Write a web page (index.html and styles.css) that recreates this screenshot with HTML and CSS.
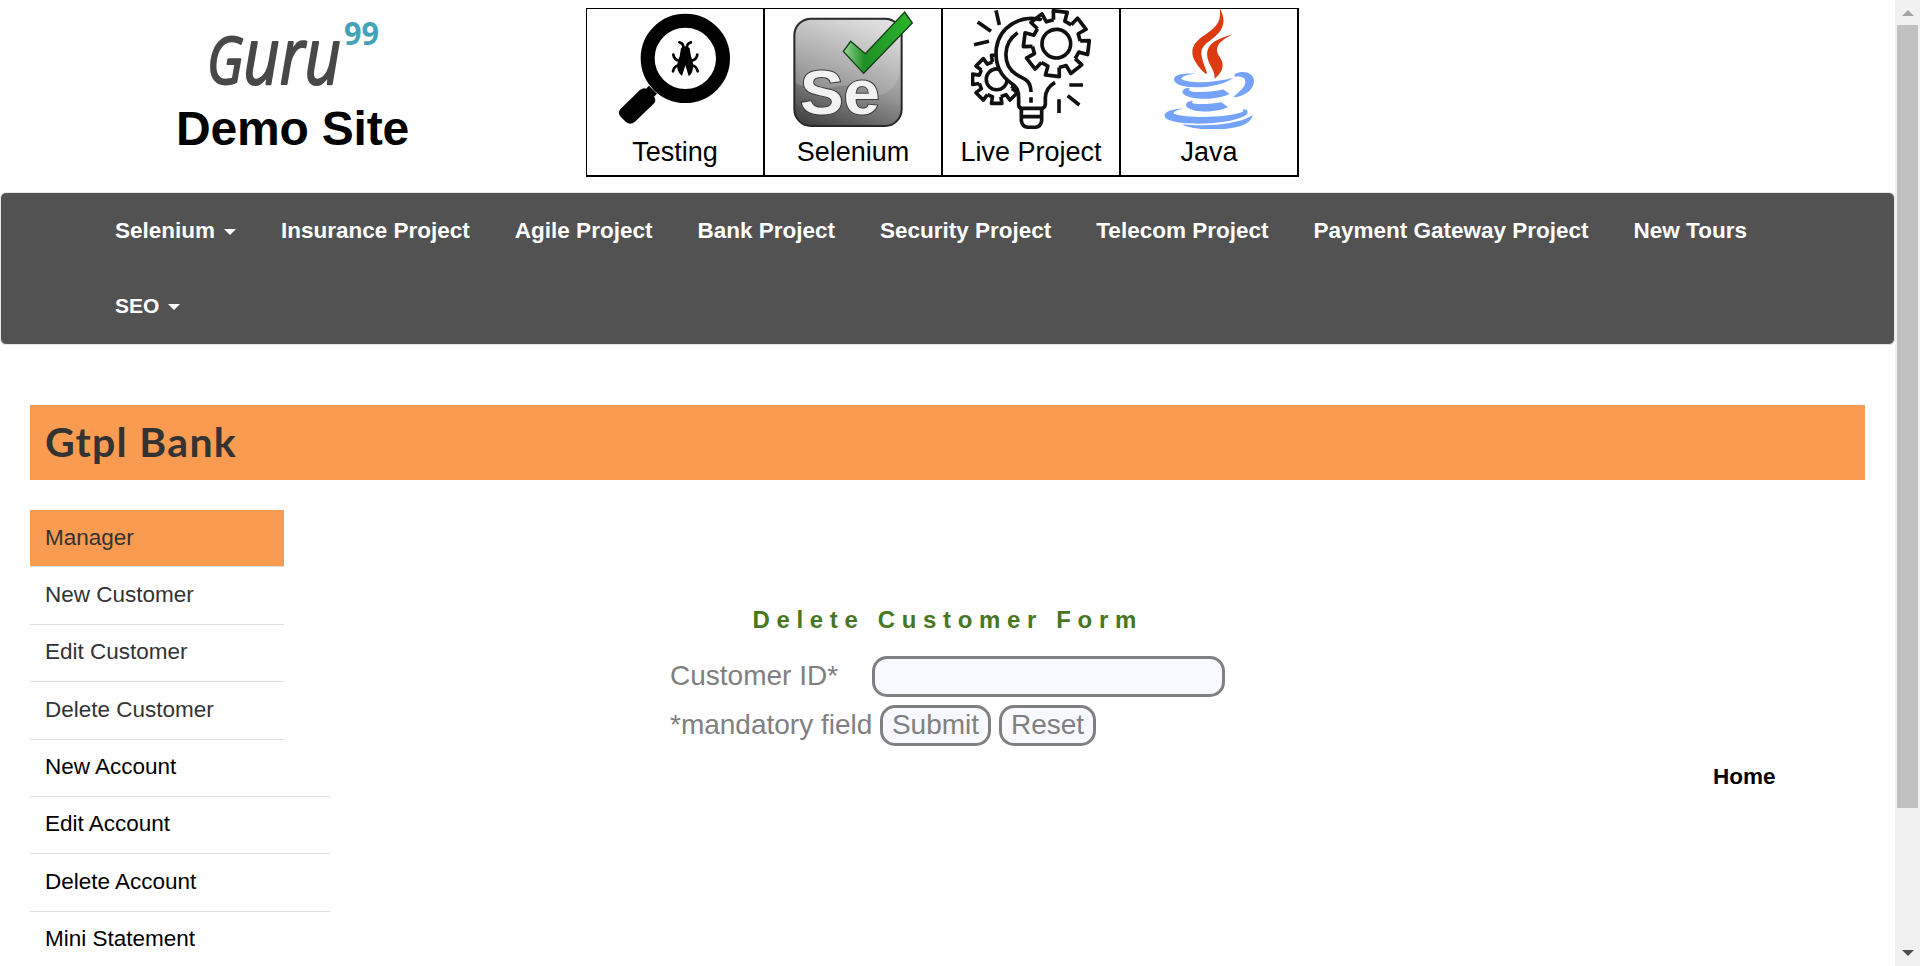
FILE: index.html
```html
<!DOCTYPE html>
<html lang="en">
<head>
<meta charset="utf-8">
<title>Delete Customer</title>
<link rel="stylesheet" href="styles.css">
</head>
<body>
<div class="window">
  <main class="page">
    <header class="header">
      <div class="brand">
        <svg class="logo" viewBox="0 -20 190 100" width="190" height="100">
          <text class="logo-name" x="6" y="64" textLength="134" lengthAdjust="spacingAndGlyphs"><tspan class="logo-initial">G</tspan>uru</text>
          <text class="logo-sup" x="143" y="24.5" textLength="35" lengthAdjust="spacingAndGlyphs">99</text>
        </svg>
        <h1 class="brand-title">Demo Site</h1>
      </div>
      <div class="tiles">
        <a class="tile">
          <svg class="tile-icon" viewBox="105 27 360 360">
            <circle cx="316" cy="175" r="113" fill="none" stroke="#000" stroke-width="42"/>
            <path d="M207 257l24 24-9 9c6 8 5 16-2 22l-56 54q-14 11-26 0l-16-16q-10-12 0-24l58-56q10-8 18-4z"/>
            <path d="M303 145q13-12 26 0l4 24q10 28 5 40-2 13-12 19l-10-32-10 32q-10-8-13-19-5-14 6-40z"/>
            <path d="M310 143q1-12-12-16M321 143q-1-12 12-16M300 183q-19-4-20-19M332 183q19-4 20-19M300 195q-18 2-21 19M332 195q18 2 21 19" fill="none" stroke="#000" stroke-width="8" stroke-linecap="round"/>
          </svg>
          <span>Testing</span>
        </a>
        <a class="tile">
          <svg class="tile-icon" viewBox="99 27 360 360">
            <defs>
              <linearGradient id="plate" x1=".6" y1="0" x2=".2" y2="1"><stop offset="0" stop-color="#d8d8d8"/><stop offset=".5" stop-color="#999"/><stop offset="1" stop-color="#444"/></linearGradient>
              <linearGradient id="gloss" x1=".8" y1="0" x2=".3" y2="1"><stop offset="0" stop-color="#e4e4e4"/><stop offset="1" stop-color="#999"/></linearGradient>
              <linearGradient id="tick" x1="0" y1="0" x2="1" y2="0"><stop offset="0" stop-color="#9bd79b"/><stop offset=".3" stop-color="#1f8f24"/><stop offset="1" stop-color="#2bb52d"/></linearGradient>
            </defs>
            <rect x="103" y="56" width="322" height="322" rx="50" fill="url(#plate)" stroke="#292929" stroke-width="6"/>
            <path d="M108 250V108q0-46 46-46h219q46 0 46 46v115q-20 63-71 63-38-36-110-28-76 19-130-8z" fill="url(#gloss)" opacity=".65"/>
            <text class="se" x="120" y="341" textLength="240" lengthAdjust="spacingAndGlyphs">Se</text>
            <path d="M272 124l44 37L434 36l23 33-146 151-61-66z" fill="url(#tick)" stroke="#123c14" stroke-width="4"/>
          </svg>
          <span>Selenium</span>
        </a>
        <a class="tile">
          <svg class="tile-icon line" viewBox="93 27 360 360">
            <defs>
              <path id="tooth" d="M-17-70L-21-97H21L17-70 37.5-61.5"/>
              <g id="gear"><use href="#tooth"/><use href="#tooth" transform="rotate(45)"/><use href="#tooth" transform="rotate(90)"/><use href="#tooth" transform="rotate(135)"/><use href="#tooth" transform="rotate(180)"/><use href="#tooth" transform="rotate(225)"/><use href="#tooth" transform="rotate(270)"/><use href="#tooth" transform="rotate(315)"/></g>
            </defs>
            <g transform="translate(170 238) scale(.745)" stroke-width="14.5"><use href="#gear"/><circle r="42"/></g>
            <path d="M308 63C245 39 178 79 169 145c-5 47 14 82 43 103 20 13 24 24 24 47v23l8 8h64l8-10v-22c0-22 11-36 29-47l40-90z" fill="#fff" stroke="none"/>
            <path d="M306 60C245 42 178 79 169 145c-5 47 14 82 43 103 20 13 24 24 24 47v19q0 10 10 11h58q11-1 12-12v-19c0-22 11-36 29-47"/>
            <path d="M233 98c-44 29-48 96-5 125 20 13 44 13 45 53M273 292v16M244 327v35q3 19 22 20h18q18-1 21-20v-35M244 350h61"/>
            <g transform="translate(349 131) rotate(7)"><path d="M0-82A82 82 0 1 1-1-82" fill="#fff" stroke="none"/><use href="#gear"/><circle r="43"/></g>
            <path d="M168 31l10 44M113 66l40 28M102 134l45-10M388 255h41M383 287l35 28M357 298v41" stroke-width="11"/>
          </svg>
          <span>Live Project</span>
        </a>
        <a class="tile">
          <svg class="tile-icon" viewBox="117 27 360 360">
            <g fill="#dc3b12">
              <path d="M329 24c13 24 19 50-4 76-21 24-51 33-51 58 0 21 12 42 17 61-1 3-4 3-6 1-18-17-39-42-38-64 1-34 37-48 61-69 19-17 25-34 21-63z"/>
              <path d="M367 103c-18 12-42 21-46 43-3 17 17 29 17 48 0 18-12 32-24 42 1-23-13-36-19-54-8-22-3-43 16-56 18-12 37-15 56-23z"/>
            </g>
            <g fill="#75a3fb">
              <path d="M257 221c-27 2-42 8-43 16 28 15 96 11 155-3-22 17-64 28-111 28-40 0-65-9-66-24 0-14 29-20 65-17z"/>
              <path d="M374 222c25-12 57-5 58 21 0 28-33 48-62 49 15-17 36-28 36-46 0-14-12-17-32-16z"/>
              <path d="M240 263c-9 8 3 12 20 13 28 1 58-1 79-8l20 14c-32 17-111 20-136 2-14-11 1-22 17-21z"/>
              <path d="M249 303c-7 7 1 8 13 9 25 1 50-1 72-5l20 14c-30 16-95 19-120 3-14-11-1-23 15-21z"/>
              <path d="M221 326c-25 4-31 10-30 15 43 15 158 12 204-4 9-4 5-8 2-10 18 0 21 13 8 20-52 27-183 31-228 13-29-13-8-35 44-34z"/>
              <path d="M216 373c71 7 162 3 212-27-5 33-66 43-121 42-37 0-73-4-91-15z"/>
            </g>
          </svg>
          <span>Java</span>
        </a>
      </div>
    </header>

    <nav class="nav">
      <a class="nav-item">Selenium <i class="caret"></i></a>
      <a class="nav-item">Insurance Project</a>
      <a class="nav-item">Agile Project</a>
      <a class="nav-item">Bank Project</a>
      <a class="nav-item">Security Project</a>
      <a class="nav-item">Telecom Project</a>
      <a class="nav-item">Payment Gateway Project</a>
      <a class="nav-item">New Tours</a>
      <a class="nav-item small">SEO <i class="caret"></i></a>
    </nav>

    <h2 class="bank">Gtpl Bank</h2>

    <div class="content">
      <ul class="menu">
        <li class="menu-item active">Manager</li>
        <li class="menu-item">New Customer</li>
        <li class="menu-item">Edit Customer</li>
        <li class="menu-item">Delete Customer</li>
        <li class="menu-item wide">New Account</li>
        <li class="menu-item wide">Edit Account</li>
        <li class="menu-item wide">Delete Account</li>
        <li class="menu-item wide">Mini Statement</li>
      </ul>
      <form class="form">
        <h3 class="form-title">Delete Customer Form</h3>
        <label class="label" for="cid">Customer ID*</label>
        <input class="field" id="cid" type="text">
        <span class="label">*mandatory field</span>
        <div class="actions">
          <button class="button submit" type="button">Submit</button>
          <button class="button reset" type="button">Reset</button>
        </div>
      </form>
      <a class="home">Home</a>
    </div>
  </main>
  <div class="scrollbar">
    <i class="arrow up"></i>
    <div class="thumb"></div>
    <i class="arrow down"></i>
  </div>
</div>
</body>
</html>
```
FILE: styles.css
```css
* { box-sizing: border-box; }
body { margin: 0; background: #fff; color: #000; font: 22.5px/32px "Liberation Sans", Arial, sans-serif; }
h1, h2, h3, ul { margin: 0; padding: 0; }
.window { display: flex; height: 966px; overflow: hidden; }
.page { width: 1895px; height: 966px; overflow: hidden; }

.header { display: flex; height: 192px; }
.brand { width: 586px; padding-left: 176px; }
.logo { display: block; margin-left: 25px; overflow: visible; }
.logo-name { font: italic 400 78px "Open Sans", sans-serif; fill: #484848; stroke: #484848; stroke-width: 2px; stroke-linejoin: round; }
.logo-initial { font-size: 66px; }
.logo-sup { font: 700 32px "Open Sans", sans-serif; fill: #45a3b9; }
.brand-title { font-size: 48px; line-height: 56px; margin-top: 1px; letter-spacing: -0.2px; }
.tiles { display: flex; height: 169px; margin-top: 8px; border: solid #000; border-width: 1px 0 2px 1px; }
.tile { display: flex; flex-direction: column; align-items: center; width: 178px; border-right: 2px solid #000; font-size: 27px; line-height: 31px; }
.tile-icon { width: 120px; height: 120px; margin-bottom: 8px; }
.tile-icon.line { fill: none; stroke: #111; stroke-width: 11; stroke-linejoin: round; }
.se { font: 700 190px "Liberation Sans", Arial, sans-serif; fill: #f2f2f2; stroke: #3b3b3b; stroke-width: 6px; paint-order: stroke; }

.nav { display: flex; flex-wrap: wrap; align-content: flex-start; height: 153px; padding: 0 100px 0 91.5px; border: 1px solid #e7e7e7; border-radius: 6px; background: #525252; }
.nav-item { display: flex; align-items: center; height: 75px; padding: 0 22.5px; color: #fff; font-weight: 700; }
.nav-item.small { font-size: 21px; }
.caret { margin: 2px 0 0 9px; border: 6px solid transparent; border-top-color: #fff; border-bottom: 0; }

.bank { width: 1835px; height: 75px; margin: 60px 0 0 30px; padding-left: 15px; background: #f99b50; color: #333; font: 700 41px/73px Lato, sans-serif; letter-spacing: 1.3px; }

.content { display: flex; margin-top: 30px; padding-left: 30px; }
.menu { width: 640px; list-style: none; }
.menu-item { width: 254px; height: 57.4px; padding: 11.5px 15px 0; border-bottom: 1px solid #ddd; color: #333; }
.menu-item.active { background: #f99b50; }
.menu-item.wide { width: 300px; color: #000; }

.form { display: grid; grid-template-columns: 202px 353px; grid-template-rows: 46px 41px 41px; row-gap: 8px; height: 200px; margin-top: 92px; color: gray; font-size: 28px; }
.form-title { grid-column: 1 / 3; padding-left: 82.5px; color: #48771f; font-size: 24px; line-height: 36px; letter-spacing: 6.65px; white-space: nowrap; }
.label { line-height: 40px; white-space: nowrap; }
.field, .button { height: 41px; padding: 0; border: 3px solid gray; border-radius: 15px; background: #f8f8ff; color: gray; font: 28px/31px "Liberation Sans", Arial, sans-serif; }
.button { padding-bottom: 2px; }
.actions { display: flex; gap: 8px; padding-left: 8px; }
.submit { width: 111px; }
.reset { width: 97px; }
.home { margin: 251px 0 0 488px; font-weight: 700; }

.scrollbar { display: flex; flex-direction: column; align-items: center; width: 25px; background: #f1f1f1; }
.thumb { width: 21px; height: 783px; margin-top: 9px; background: #c1c1c1; }
.arrow { border: 6px solid transparent; }
.up { margin-top: 10px; border-top: 0; border-bottom-color: #a3a3a3; }
.down { margin-top: 142px; border-bottom: 0; border-top-color: #505050; }
```
